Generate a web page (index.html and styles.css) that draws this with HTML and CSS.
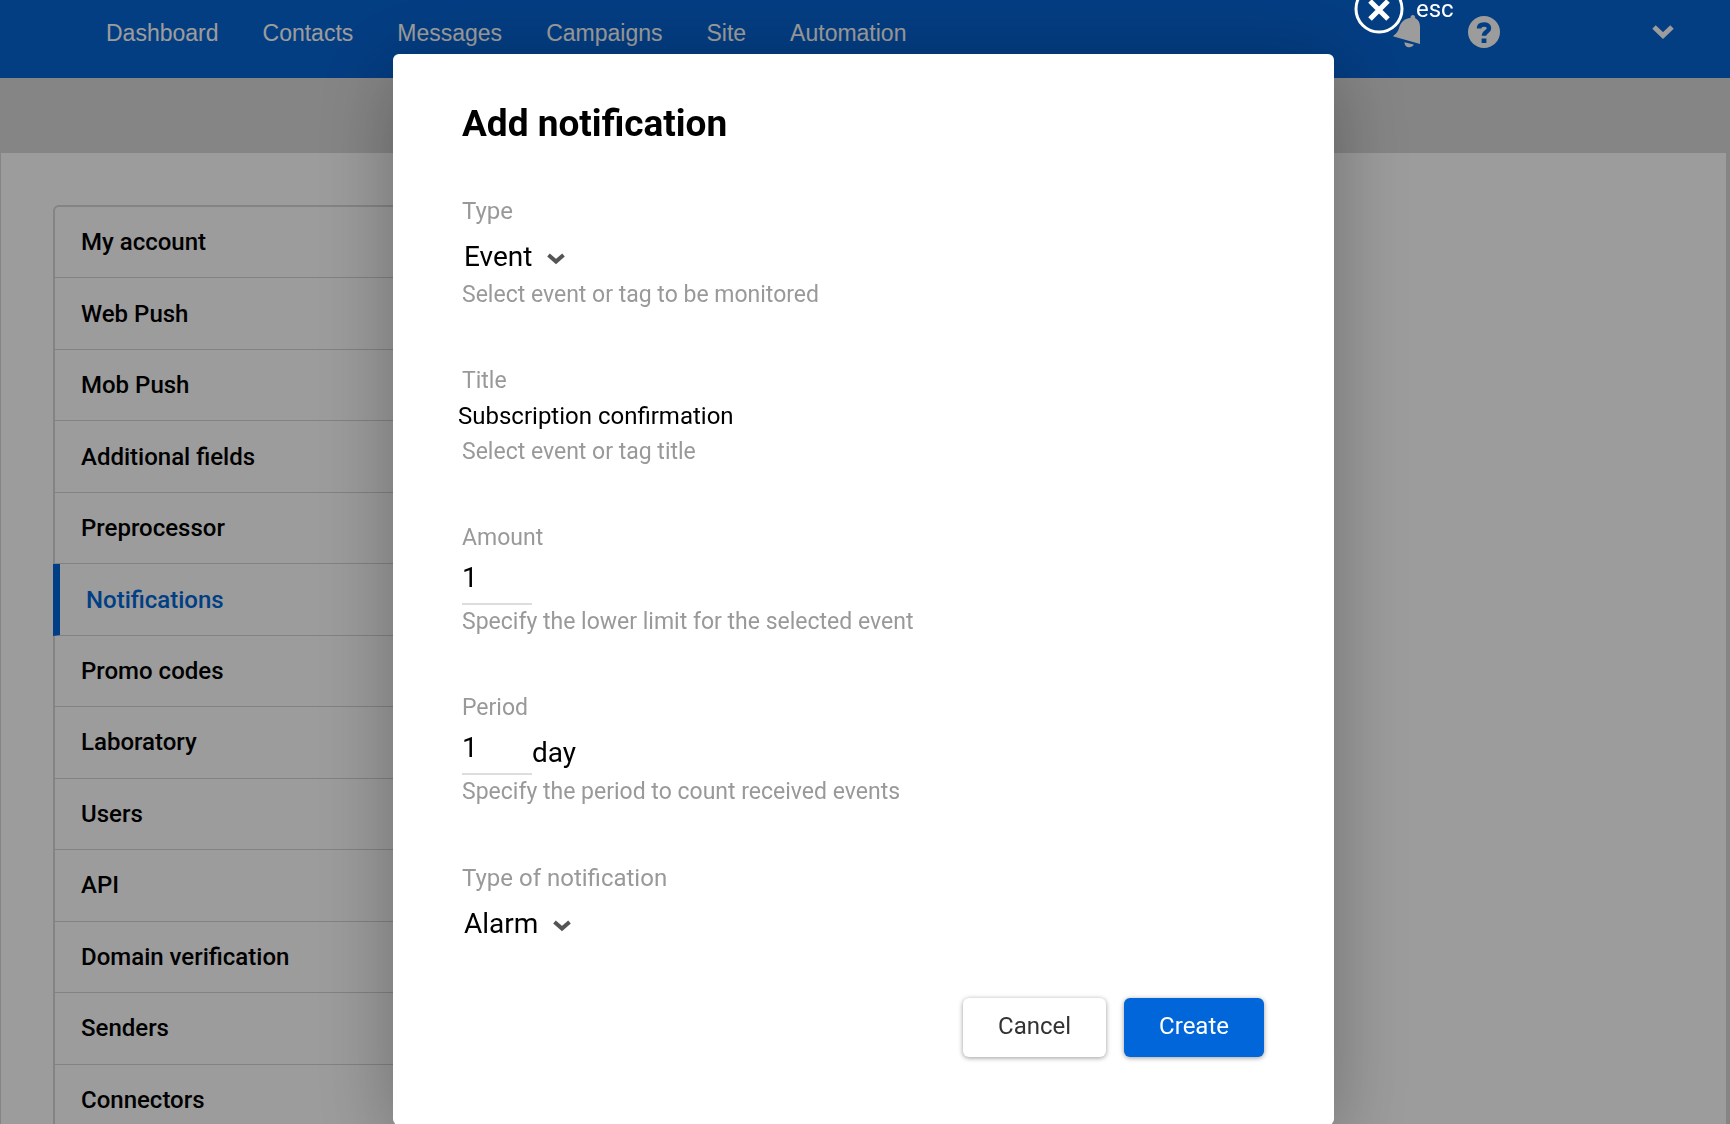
FILE: index.html
```
<!DOCTYPE html>
<html lang="en">
<head>
    <meta charset="UTF-8">
    <meta name="viewport" content="width=device-width, initial-scale=1.0">
    <title>Notifications</title>
    <link rel="stylesheet" href="styles.css">
</head>
<body>
    <header class="topbar">
        <nav class="nav">
            <a href="#">Dashboard</a>
            <a href="#">Contacts</a>
            <a href="#">Messages</a>
            <a href="#">Campaigns</a>
            <a href="#">Site</a>
            <a href="#">Automation</a>
        </nav>
        <div class="tools">
            <button class="icon-btn" aria-label="Alerts">
                <svg width="28" height="34" viewBox="0 0 28 34"><path d="M20 0c1.500 .3 2.300 1.400 2.100 2.900 3 1.500 4.900 4.500 4.900 8.300v17.800L.6 21.500c-.5-.2-.4-.8 0-1.100C3.500 18.500 5 16.500 6.200 12.500 7.600 7.500 11.400 3.300 17.400 3c.1-1.800 1-3 2.600-3zM11.500 27.200l9.300 2.400c-1 2-3 3-5.500 2.600-2.400-.4-4-2.400-3.800-5z" fill="currentColor"/></svg>
            </button>
            <button class="icon-btn" aria-label="Help">
                <svg width="32" height="32" viewBox="0 0 32 32"><circle cx="16" cy="16" r="16" fill="currentColor"/><path d="M11 12.500c0-3 2.200-4 5-4s5 1.300 5 3.700c0 3.600-5 3.600-5 7.600" fill="none" stroke="#0066d9" stroke-width="4.500"/><path d="M13.600 22.500h4.800v4.500h-4.800z" fill="#0066d9"/></svg>
            </button>
            <button class="icon-btn profile" aria-label="Profile">
                <svg width="22" height="14" viewBox="0 0 22 14"><path d="M2 2l9 8.500L20 2" fill="none" stroke="currentColor" stroke-width="5"/></svg>
            </button>
        </div>
    </header>

    <main class="page">
        <ul class="menu">
            <li><a href="#">My account</a></li>
            <li><a href="#">Web Push</a></li>
            <li><a href="#">Mob Push</a></li>
            <li><a href="#">Additional fields</a></li>
            <li><a href="#">Preprocessor</a></li>
            <li class="active"><a href="#">Notifications</a></li>
            <li><a href="#">Promo codes</a></li>
            <li><a href="#">Laboratory</a></li>
            <li><a href="#">Users</a></li>
            <li><a href="#">API</a></li>
            <li><a href="#">Domain verification</a></li>
            <li><a href="#">Senders</a></li>
            <li><a href="#">Connectors</a></li>
        </ul>
    </main>

    <div class="overlay">
        <div class="modal" role="dialog" aria-labelledby="modalTitle">
            <button class="close" aria-label="Close">
                <svg width="50" height="50" viewBox="0 0 50 50"><circle cx="25" cy="25" r="23" fill="none" stroke="currentColor" stroke-width="3"/><path d="M16 17l18 18M34 17l-18 18" stroke="currentColor" stroke-width="5"/></svg>
                <span>esc</span>
            </button>

            <form>
                <h2 id="modalTitle">Add notification</h2>

                <div class="field large">
                    <label for="type">Type</label>
                    <div class="control select">
                        <select id="type">
                            <option>Event</option>
                            <option>Tag</option>
                        </select>
                        <svg class="arrow" width="18" height="12" viewBox="0 0 18 12"><path d="M1.500 2L9 8.500 16.500 2" fill="none" stroke="currentColor" stroke-width="4"/></svg>
                    </div>
                    <p class="hint">Select event or tag to be monitored</p>
                </div>

                <div class="field">
                    <label for="title">Title</label>
                    <div class="control title">
                        <input type="text" id="title" value="Subscription confirmation">
                    </div>
                    <p class="hint">Select event or tag title</p>
                </div>

                <div class="field">
                    <label for="amount">Amount</label>
                    <div class="control">
                        <input class="number" type="text" id="amount" value="1">
                    </div>
                    <p class="hint">Specify the lower limit for the selected event</p>
                </div>

                <div class="field">
                    <label for="period">Period</label>
                    <div class="control">
                        <input class="number" type="text" id="period" value="1">
                        <span class="unit">day</span>
                    </div>
                    <p class="hint">Specify the period to count received events</p>
                </div>

                <div class="field large">
                    <label for="kind">Type of notification</label>
                    <div class="control select">
                        <select id="kind">
                            <option>Alarm</option>
                            <option>Info</option>
                        </select>
                        <svg class="arrow" width="18" height="12" viewBox="0 0 18 12"><path d="M1.500 2L9 8.500 16.500 2" fill="none" stroke="currentColor" stroke-width="4"/></svg>
                    </div>
                </div>

                <div class="actions">
                    <button type="button" class="btn">Cancel</button>
                    <button type="submit" class="btn primary">Create</button>
                </div>
            </form>
        </div>
    </div>
</body>
</html>
```
FILE: styles.css
```
* {
    box-sizing: border-box;
}
body {
    margin: 0;
    height: 100vh;
    overflow: hidden;
    background-color: #dadada;
    font-family: Roboto, "Liberation Sans", sans-serif;
    color: #000;
}
button, input, select {
    font-family: inherit;
    color: inherit;
    margin: 0;
    padding: 0;
    border: none;
    background: none;
    outline: none;
}
button {
    cursor: pointer;
}
svg {
    display: block;
}

/* top bar */
.topbar {
    display: flex;
    justify-content: space-between;
    height: 78px;
    padding: 0 56px 14px 106px;
    background-color: #0664d4;
    color: #fff;
}
.nav {
    display: flex;
    align-items: center;
    gap: 44px;
    padding-top: 2px;
}
.nav a {
    font-family: "Liberation Sans", Arial, sans-serif;
    font-size: 23px;
    color: #fff;
    text-decoration: none;
}
.tools {
    display: flex;
    align-items: center;
    gap: 47px;
}
.profile {
    margin-left: 105px;
}

/* page */
.page {
    margin: 75px 4px 0 0;
    padding: 52px;
    border-left: 1px solid #dadada;
    background-color: #fff;
}
.menu {
    display: grid;
    grid-auto-rows: 1fr;
    width: 400px;
    min-height: 933px;
    margin: 0;
    padding: 0;
    list-style: none;
    border: 2px solid #d8d8d8;
    border-radius: 6px;
}
.menu li {
    display: flex;
    align-items: center;
    padding-left: 26px;
    border-bottom: 1px solid #d4d4d4;
}
.menu a {
    font-size: 24px;
    font-weight: 500;
    color: #000;
    text-decoration: none;
}
.menu .active {
    margin-left: -2px;
    border-left: 7px solid #0066d9;
}
.menu .active a {
    color: #0066d9;
}

/* modal */
.overlay {
    position: fixed;
    inset: 0;
    display: flex;
    justify-content: center;
    align-items: flex-start;
    padding: 54px 3px 0 0;
    background-color: rgba(0, 0, 0, 0.39);
}
.modal {
    position: relative;
    width: 941px;
    padding: 45px 70px 68px 69px;
    background-color: #fff;
    border-radius: 6px;
    box-shadow: 0 16px 80px rgba(0, 0, 0, 0.3);
}
.modal h2 {
    margin: 0 0 49px;
    font-size: 37px;
    line-height: 50px;
    font-weight: 700;
}
.close {
    position: absolute;
    top: -70px;
    left: 961px;
    display: flex;
    align-items: center;
    gap: 12px;
    color: #fff;
    font-size: 24px;
    line-height: 18px;
}
.field {
    margin-bottom: 60px;
}
.field label {
    display: block;
    font-size: 23px;
    line-height: 26px;
    color: #999;
}
.large label {
    font-size: 24px;
}
.hint {
    margin: 0;
    font-size: 23px;
    line-height: 26px;
    color: #999;
}
.control {
    display: flex;
    align-items: flex-end;
    height: 58px;
    padding-bottom: 4px;
    font-size: 28px;
    line-height: 36px;
}
.select {
    align-items: center;
    gap: 14px;
    padding: 7px 0 0 2px;
}
.select select {
    appearance: none;
    font-size: 28px;
    line-height: 36px;
}
.arrow {
    margin-top: 4px;
    color: #555;
}
.title {
    height: 45px;
    padding-bottom: 9px;
}
.title input {
    width: 100%;
    margin-left: -4px;
    font-size: 24px;
    line-height: 28px;
}
.number {
    width: 70px;
    height: 46px;
    padding-bottom: 8px;
    border-bottom: 2px solid #ddd;
    font-size: 28px;
}
.unit {
    padding-bottom: 4px;
}
.actions {
    display: flex;
    justify-content: flex-end;
    gap: 18px;
    margin-top: -11px;
}
.btn {
    height: 59px;
    padding: 0 35px 3px;
    border-radius: 6px;
    background-color: #fff;
    box-shadow: 0 1px 5px rgba(0, 0, 0, 0.4);
    font-size: 24px;
    color: #333;
}
.primary {
    background-color: #0066d9;
    color: #fff;
}
```
